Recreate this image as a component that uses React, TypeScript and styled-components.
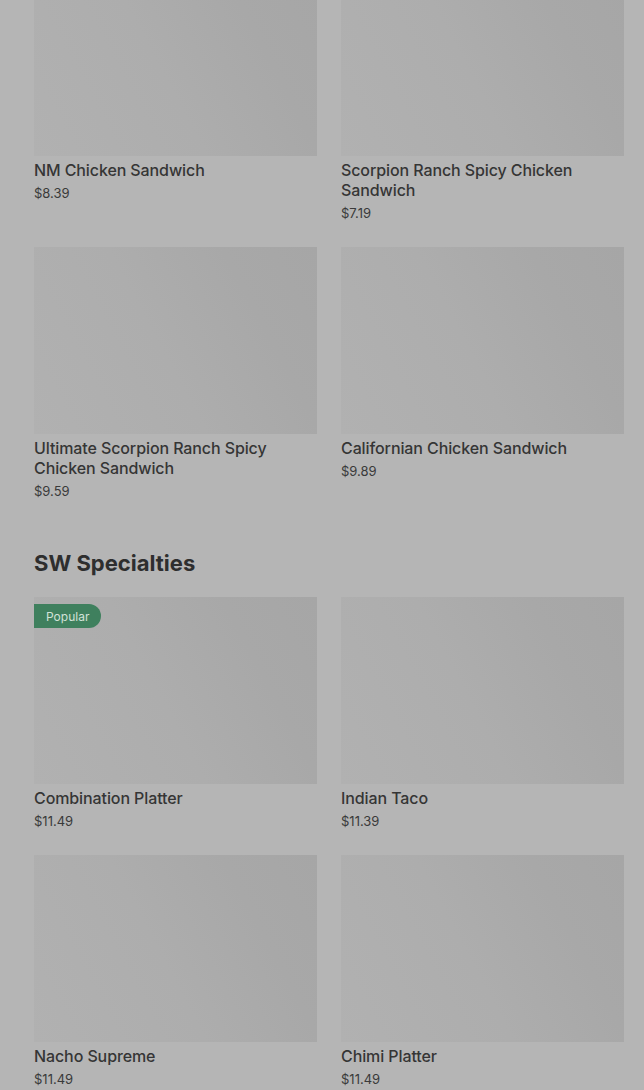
import styled, { createGlobalStyle } from "styled-components";

type Item = { name: string; price: string; popular?: boolean };

const sandwiches: Item[] = [
    { name: "NM Chicken Sandwich", price: "$8.39" },
    { name: "Scorpion Ranch Spicy Chicken Sandwich", price: "$7.19" },
    { name: "Ultimate Scorpion Ranch Spicy Chicken Sandwich", price: "$9.59" },
    { name: "Californian Chicken Sandwich", price: "$9.89" },
];

const specialties: Item[] = [
    { name: "Combination Platter", price: "$11.49", popular: true },
    { name: "Indian Taco", price: "$11.39" },
    { name: "Nacho Supreme", price: "$11.49" },
    { name: "Chimi Platter", price: "$11.49" },
];

function ItemCard({ item }: { item: Item }) {
    return (
        <Card>
            <Thumb>
                {item.popular && <Badge>Popular</Badge>}
            </Thumb>
            <Name>{item.name}</Name>
            <Price>{item.price}</Price>
        </Card>
    );
}

export default function App() {
    return (
        <>
            <Global />
            <Page>
                <Grid>
                    {sandwiches.map((i) => <ItemCard key={i.name} item={i} />)}
                </Grid>
                <Section>
                    <Heading>SW Specialties</Heading>
                    <Grid>
                        {specialties.map((i) => <ItemCard key={i.name} item={i} />)}
                    </Grid>
                </Section>
            </Page>
        </>
    );
}

const Global = createGlobalStyle`
body{
    margin: 0;
    background: #b5b5b5;
    font-family: Inter, "Noto Sans", sans-serif;
    overflow: hidden;
}
`;

const Page = styled.div`
    padding: 0 20px 40px 34px;
    margin-top: -31px;
    height: 1121px;
    overflow: hidden;
    background: #b5b5b5;
`;

const Grid = styled.div`
    display: grid;
    grid-template-columns: 1fr 1fr;
    column-gap: 24px;
    row-gap: 25px;
`;

const Card = styled.div`
    display: flex;
    flex-direction: column;
`;

const Thumb = styled.div`
    position: relative;
    height: 187px;
    background: linear-gradient(62deg, #b1b1b1 0%, #adadad 45%, #a8a8a8 75%, #a6a6a6 100%);
    margin-bottom: 4px;
`;

const Badge = styled.span`
    position: absolute;
    top: 7px;
    left: 0;
    height: 24px;
    padding: 0 12px 0 12px;
    display: flex;
    align-items: center;
    background: #3f805e;
    color: #d2e2d8;
    font-size: 12px;
    border-radius: 0 12px 12px 0;
`;

const Name = styled.div`
    color: #353535;
    font-size: 16px;
    font-weight: 500;
    line-height: 20px;
    letter-spacing: -0.1px;
`;

const Price = styled.div`
    color: #3a3a3a;
    font-size: 13px;
    line-height: 18px;
    margin-top: 4px;
`;

const Section = styled.section`
    margin-top: 49px;
`;

const Heading = styled.h2`
    margin: 0 0 20px;
    color: #2e2e2e;
    font-size: 22px;
    font-weight: 700;
    line-height: 28px;
    letter-spacing: 0;
`;
